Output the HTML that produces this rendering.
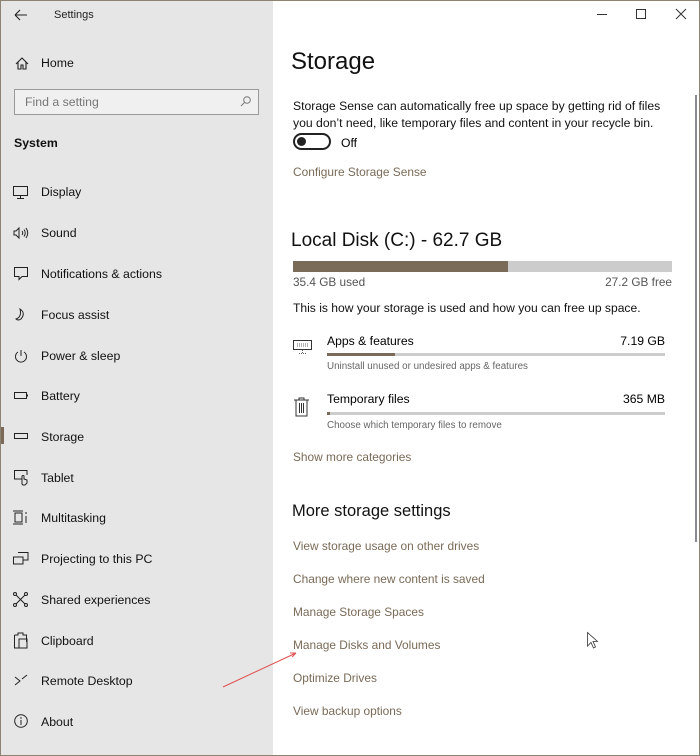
<!DOCTYPE html>
<html><head><meta charset="utf-8"><style>
*{margin:0;padding:0;box-sizing:border-box}
body{width:700px;height:756px;overflow:hidden;font-family:"Liberation Sans",sans-serif;background:#fff;position:relative;color:#000}
.frame{position:absolute;left:0;top:0;width:700px;height:756px;border:1px solid #8c8373;pointer-events:none;z-index:5}
.side{position:absolute;left:0;top:0;width:273px;height:756px;background:#e6e6e6}
.t{position:absolute;white-space:nowrap;line-height:1}
.r{position:absolute;white-space:nowrap;line-height:1;text-align:right}
.nav{position:absolute;left:41px;font-size:12.3px;color:#111}
.link{color:#7a6a57;font-size:11.9px}
svg{position:absolute;overflow:visible}
</style></head><body>
<div class="side"></div>
<svg style="left:14px;top:9px" width="14" height="12"><path d="M1 6H13M1 6L6 1M1 6L6 11" stroke="#222" fill="none" stroke-width="1.1"/></svg>
<div class="t" style="left:54px;top:10px;font-size:11px;color:#222">Settings</div>
<svg style="left:597px;top:14px" width="10" height="2"><path d="M0 .5H10" stroke="#333"/></svg>
<svg style="left:636px;top:9px" width="10" height="10"><rect x=".5" y=".5" width="9" height="9" fill="none" stroke="#333"/></svg>
<svg style="left:676px;top:9px" width="10" height="10"><path d="M0 0L10 10M10 0L0 10" stroke="#333"/></svg>
<svg style="left:15px;top:57px" width="14" height="13"><path d="M1 7L7 1L13 7M3 5V12H6V8H8V12H11V5" stroke="#222" fill="none" stroke-width="1.1"/></svg>
<div class="t nav" style="top:57px">Home</div>
<div style="position:absolute;left:14px;top:89px;width:245px;height:26px;border:1.5px solid #999;background:#f0f0f0"></div>
<div class="t" style="left:25px;top:96px;font-size:12.3px;color:#777">Find a setting</div>
<svg style="left:240px;top:96px" width="11" height="11"><circle cx="7" cy="4" r="3.3" stroke="#777" fill="none"/><path d="M4.5 6.5L1 10" stroke="#777"/></svg>
<div class="t" style="left:14px;top:137px;font-size:12.3px;font-weight:bold;color:#111">System</div>
<svg style="left:13px;top:186px" width="16" height="13"><rect x=".5" y=".5" width="14" height="9" fill="none" stroke="#222"/><path d="M7.5 10V12M4 12.5H11" stroke="#222"/></svg>
<div class="t nav" style="top:186px">Display</div>
<svg style="left:13px;top:227px" width="16" height="12"><path d="M1 4H3L6 1V11L3 8H1Z" fill="none" stroke="#222"/><path d="M9 4Q10.5 6 9 8M11 2.5Q13.5 6 11 9.5M13 1Q16.5 6 13 11" fill="none" stroke="#222"/></svg>
<div class="t nav" style="top:227px">Sound</div>
<svg style="left:14px;top:267px" width="14" height="14"><path d="M.5 .5H13.5V9.5H8L5 12.5V9.5H.5Z" fill="none" stroke="#222"/></svg>
<div class="t nav" style="top:268px">Notifications &amp; actions</div>
<svg style="left:15px;top:308px" width="12" height="14"><path d="M5 1Q11 5 6 11Q3 13 1 11Q7 9 5 1Z" fill="none" stroke="#222"/></svg>
<div class="t nav" style="top:309px">Focus assist</div>
<svg style="left:14px;top:349px" width="14" height="14"><path d="M4 3A5.5 5.5 0 1 0 10 3" fill="none" stroke="#222"/><path d="M7 1V7" stroke="#222"/></svg>
<div class="t nav" style="top:350px">Power &amp; sleep</div>
<svg style="left:14px;top:392px" width="16" height="8"><rect x=".5" y=".5" width="12" height="6" fill="none" stroke="#222"/><path d="M13 2.5V4.5" stroke="#222" stroke-width="2"/></svg>
<div class="t nav" style="top:390px">Battery</div>
<div style="position:absolute;left:1px;top:427px;width:3px;height:17px;background:#7a6a57"></div>
<svg style="left:14px;top:433px" width="16" height="7"><rect x=".5" y=".5" width="13" height="5" fill="none" stroke="#222"/></svg>
<div class="t nav" style="top:431px">Storage</div>
<svg style="left:14px;top:470px" width="16" height="16"><path d="M8 9H.5V.5H13V5" fill="none" stroke="#222"/><path d="M8 14V6Q9.5 5 10 6V9L13 10V13L11 15H9Z" fill="none" stroke="#222"/></svg>
<div class="t nav" style="top:472px">Tablet</div>
<svg style="left:13px;top:510px" width="16" height="15"><path d="M0 1H10M0 14H10M2 3H9V12H2Z M13 2V4M13 6V13" fill="none" stroke="#222"/></svg>
<div class="t nav" style="top:512px">Multitasking</div>
<svg style="left:13px;top:552px" width="16" height="14"><path d="M5 .5H15V8H10M.5 5H10V12H.5Z" fill="none" stroke="#222"/></svg>
<div class="t nav" style="top:553px">Projecting to this PC</div>
<svg style="left:13px;top:592px" width="16" height="15"><circle cx="2" cy="2" r="1.5" fill="none" stroke="#222"/><circle cx="13" cy="2" r="1.5" fill="none" stroke="#222"/><circle cx="2" cy="13" r="1.5" fill="none" stroke="#222"/><circle cx="13" cy="13" r="1.5" fill="none" stroke="#222"/><path d="M3 3L12 12M12 3L3 12" stroke="#222"/></svg>
<div class="t nav" style="top:594px">Shared experiences</div>
<svg style="left:14px;top:632px" width="14" height="17"><path d="M.5 3H4V1H9V3H12.5V10M.5 3V16H5M5 7H13V16H5Z" fill="none" stroke="#222"/></svg>
<div class="t nav" style="top:635px">Clipboard</div>
<svg style="left:14px;top:674px" width="14" height="14"><path d="M1 3L6 7L1 11M13 1L8 5" fill="none" stroke="#222"/></svg>
<div class="t nav" style="top:675px">Remote Desktop</div>
<svg style="left:14px;top:714px" width="15" height="15"><circle cx="7" cy="7" r="6.3" fill="none" stroke="#222"/><path d="M7 6V11" stroke="#222"/><circle cx="7" cy="4" r=".8" fill="#222"/></svg>
<div class="t nav" style="top:716px">About</div>

<div class="t" style="left:291px;top:50px;font-size:24px;color:#111">Storage</div>
<div class="t" style="left:293px;top:98px;font-size:12.2px;line-height:16.5px;color:#111">Storage Sense can automatically free up space by getting rid of files<br>you don’t need, like temporary files and content in your recycle bin.</div>
<div style="position:absolute;left:293px;top:133px;width:38px;height:17px;border:2px solid #222;border-radius:9px"></div>
<div style="position:absolute;left:297px;top:137px;width:9px;height:9px;background:#222;border-radius:50%"></div>
<div class="t" style="left:341px;top:137px;font-size:12.2px">Off</div>
<div class="t link" style="left:293px;top:167px">Configure Storage Sense</div>

<div class="t" style="left:291px;top:231px;font-size:19px;color:#111">Local Disk (C:) - 62.7 GB</div>
<div style="position:absolute;left:293px;top:261px;width:379px;height:11px;background:#ccc"></div>
<div style="position:absolute;left:293px;top:261px;width:215px;height:11px;background:#7a6b58"></div>
<div class="t" style="left:293px;top:277px;font-size:11.8px;color:#555">35.4 GB used</div>
<div class="r" style="right:28px;top:277px;font-size:11.8px;color:#555">27.2 GB free</div>
<div class="t" style="left:293px;top:302px;font-size:12.1px;color:#111">This is how your storage is used and how you can free up space.</div>

<svg style="left:293px;top:340px" width="20" height="15"><rect x=".5" y=".5" width="18" height="9" fill="none" stroke="#333"/><path d="M4 4H15M4 6H15M9.5 10V13M6 13.5H13" stroke="#666" stroke-dasharray="1 1"/></svg>
<div class="t" style="left:327px;top:335px;font-size:12.2px">Apps &amp; features</div>
<div class="r" style="right:35px;top:335px;font-size:12.2px">7.19 GB</div>
<div style="position:absolute;left:327px;top:353px;width:338px;height:3px;background:#ccc"></div>
<div style="position:absolute;left:327px;top:353px;width:68px;height:3px;background:#7a6b58"></div>
<div class="t" style="left:327px;top:362px;font-size:9.8px;color:#666">Uninstall unused or undesired apps &amp; features</div>

<svg style="left:294px;top:397px" width="16" height="20"><path d="M0 3H15M5 3V1H10V3M2 3V19H13V3M5.5 6V16M7.5 6V16M9.5 6V16" fill="none" stroke="#333"/></svg>
<div class="t" style="left:327px;top:393px;font-size:12.2px">Temporary files</div>
<div class="r" style="right:35px;top:393px;font-size:12.2px">365 MB</div>
<div style="position:absolute;left:327px;top:412px;width:338px;height:3px;background:#ccc"></div>
<div style="position:absolute;left:327px;top:412px;width:3px;height:3px;background:#7a6b58"></div>
<div class="t" style="left:327px;top:421px;font-size:9.8px;color:#666">Choose which temporary files to remove</div>

<div class="t link" style="left:293px;top:452px">Show more categories</div>
<div class="t" style="left:292px;top:503px;font-size:16.5px;color:#111">More storage settings</div>
<div class="t link" style="left:293px;top:541px">View storage usage on other drives</div>
<div class="t link" style="left:293px;top:574px">Change where new content is saved</div>
<div class="t link" style="left:293px;top:607px">Manage Storage Spaces</div>
<div class="t link" style="left:293px;top:640px">Manage Disks and Volumes</div>
<div class="t link" style="left:293px;top:673px">Optimize Drives</div>
<div class="t link" style="left:293px;top:706px">View backup options</div>

<div style="position:absolute;left:695px;top:95px;width:2px;height:447px;background:#8a8a95"></div>
<svg style="left:0;top:0" width="700" height="756"><path d="M223 687L296 653" stroke="#e05050" stroke-width="1"/><path d="M296 653L290 653M296 653L292 657" stroke="#e05050"/></svg>
<svg style="left:587px;top:632px" width="12" height="18"><path d="M.5 .5V14L4 10.5L6.5 16L8.5 15L6 9.5H10.5Z" fill="#fff" stroke="#333" stroke-width=".8"/></svg>
<div class="frame"></div>
</body></html>
